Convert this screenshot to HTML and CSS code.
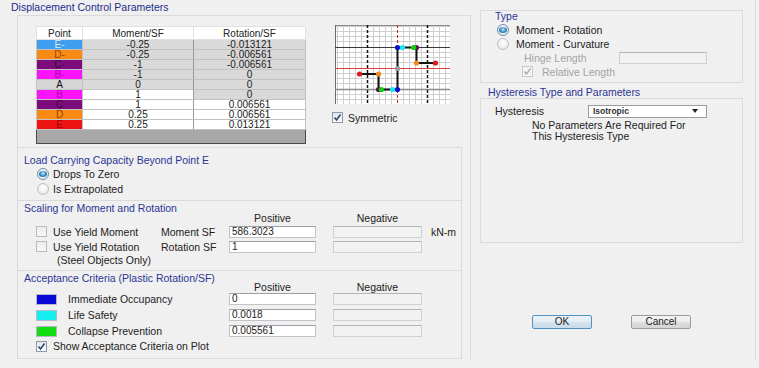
FILE: index.html
```html
<!DOCTYPE html>
<html lang="en">
<head>
    <meta charset="UTF-8">
    <meta name="viewport" content="width=device-width, initial-scale=1.0">
    <title>Displacement Control Parameters</title>
    <link rel="stylesheet" href="styles.css">
</head>
<body>
<div class="dialog">
    <div class="left">
        <div class="caption">Displacement Control Parameters</div>
        <div class="panel">
            <div class="top-group">
                <table class="points">
                    <colgroup><col class="c-pt"><col class="c-mo"><col class="c-ro"></colgroup>
                    <tr><th>Point</th><th>Moment/SF</th><th>Rotation/SF</th></tr>
                    <tr><td class="pt e-neg">E-</td><td class="ro">-0.25</td><td class="ro">-0.013121</td></tr>
                    <tr><td class="pt d-neg">D-</td><td class="ro">-0.25</td><td class="ro">-0.006561</td></tr>
                    <tr><td class="pt c-neg">C-</td><td class="ro">-1</td><td class="ro">-0.006561</td></tr>
                    <tr><td class="pt b-neg">B-</td><td class="ro">-1</td><td class="ro">0</td></tr>
                    <tr><td class="pt a">A</td><td class="ro">0</td><td class="ro">0</td></tr>
                    <tr><td class="pt b">B</td><td>1</td><td class="ro">0</td></tr>
                    <tr><td class="pt c">C</td><td>1</td><td>0.006561</td></tr>
                    <tr><td class="pt d">D</td><td>0.25</td><td>0.006561</td></tr>
                    <tr><td class="pt e">E</td><td>0.25</td><td>0.013121</td></tr>
                    <tr class="filler"><td colspan="3"></td></tr>
                </table>
                <div class="plot-col">
                    <svg class="plot" width="115" height="79" viewBox="0 0 115 79">
                        <rect width="115" height="79" fill="#fff"/>
                        <path d="M2.5 0V79M8.5 0V79M14.5 0V79M20.5 0V79M26.5 0V79M38.5 0V79M44.5 0V79M50.5 0V79M56.5 0V79M68.5 0V79M74.5 0V79M80.5 0V79M86.5 0V79M98.5 0V79M104.5 0V79M110.5 0V79" stroke="#cfcfcf" stroke-width="1"/>
                        <path d="M0 1.5H115M0 6.5H115M0 11.5H115M0 16.5H115M0 27.5H115M0 32.5H115M0 37.5H115M0 48.5H115M0 53.5H115M0 58.5H115M0 69.5H115M0 74.5H115" stroke="#cfcfcf" stroke-width="1"/>
                        <path d="M0 0.5H115" stroke="#8a8a8a"/>
                        <path d="M0.5 0V79" stroke="#6a6a6a"/>
                        <path d="M0 22.5H115" stroke="#3a3a3a"/>
                        <path d="M0 64.5H115" stroke="#8c8c8c" stroke-width="1.5"/>
                        <path d="M0 43.5H115" stroke="#e04040"/>
                        <path d="M32.5 0V79M92.5 0V79" stroke="#111" stroke-width="1.5" stroke-dasharray="3 2"/>
                        <path d="M62.5 0V79" stroke="#d02020" stroke-dasharray="3 2"/>
                        <path d="M62.5 22.5V64.5M62.5 22.5H81.5V38H100.5M62.5 64.5H43.5V49H24.5" fill="none" stroke="#111" stroke-width="2"/>
                        <circle cx="62.5" cy="43.5" r="2.6" fill="#9a9a9a"/>
                        <circle cx="100.5" cy="38" r="2.6" fill="#dd1c1c"/>
                        <circle cx="81.5" cy="38" r="2.6" fill="#f28a1e"/>
                        <circle cx="81.5" cy="22.5" r="2.6" fill="#5a1a50"/>
                        <circle cx="78.5" cy="22.5" r="2.6" fill="#12d012"/>
                        <circle cx="67.5" cy="22.5" r="2.6" fill="#18e8f0"/>
                        <circle cx="62.5" cy="22.5" r="2.6" fill="#1010cc"/>
                        <circle cx="24.5" cy="49" r="2.6" fill="#dd1c1c"/>
                        <circle cx="43.5" cy="49" r="2.6" fill="#f28a1e"/>
                        <circle cx="43.5" cy="64.5" r="2.6" fill="#5a1a50"/>
                        <circle cx="46.5" cy="64.5" r="2.6" fill="#12d012"/>
                        <circle cx="57.5" cy="64.5" r="2.6" fill="#18e8f0"/>
                        <circle cx="62.5" cy="64.5" r="2.6" fill="#1010cc"/>
                    </svg>
                    <div class="sym-row">
                        <span class="check on"><svg width="9" height="9" viewBox="0 0 9 9"><polyline points="1.5,4.5 3.5,7 7.5,1.5" fill="none" stroke="#23476e" stroke-width="1.5"/></svg></span>
                        <span>Symmetric</span>
                    </div>
                </div>
            </div>

            <div class="group load">
                <div class="glabel">Load Carrying Capacity Beyond Point E</div>
                <div class="opt"><span class="radio on"></span><span>Drops To Zero</span></div>
                <div class="opt"><span class="radio"></span><span>Is Extrapolated</span></div>
            </div>

            <div class="group scaling">
                <div class="glabel">Scaling for Moment and Rotation</div>
                <div class="frow heads"><span></span><span></span><span class="hd">Positive</span><span></span><span class="hd">Negative</span></div>
                <div class="frow r15">
                    <span class="ck"><span class="check off"></span><span>Use Yield Moment</span></span>
                    <span>Moment SF</span>
                    <span class="field">586.3023</span><span></span>
                    <span class="field dis"></span>
                    <span class="unit">kN-m</span>
                </div>
                <div class="frow r15">
                    <span class="ck"><span class="check off"></span><span>Use Yield Rotation</span></span>
                    <span>Rotation SF</span>
                    <span class="field">1</span><span></span>
                    <span class="field dis"></span>
                </div>
                <div class="steel">(Steel Objects Only)</div>
            </div>

            <div class="group accept">
                <div class="glabel">Acceptance Criteria (Plastic Rotation/SF)</div>
                <div class="frow heads short"><span></span><span></span><span class="hd">Positive</span><span></span><span class="hd">Negative</span></div>
                <div class="frow r16">
                    <span class="sw-cell"><span class="swatch io"></span><span>Immediate Occupancy</span></span>
                    <span class="field">0</span><span></span>
                    <span class="field dis"></span>
                </div>
                <div class="frow r16">
                    <span class="sw-cell"><span class="swatch ls"></span><span>Life Safety</span></span>
                    <span class="field">0.0018</span><span></span>
                    <span class="field dis"></span>
                </div>
                <div class="frow r16">
                    <span class="sw-cell"><span class="swatch cp"></span><span>Collapse Prevention</span></span>
                    <span class="field">0.005561</span><span></span>
                    <span class="field dis"></span>
                </div>
                <div class="show-row">
                    <span class="check on"><svg width="9" height="9" viewBox="0 0 9 9"><polyline points="1.5,4.5 3.5,7 7.5,1.5" fill="none" stroke="#23476e" stroke-width="1.5"/></svg></span>
                    <span>Show Acceptance Criteria on Plot</span>
                </div>
            </div>
        </div>
    </div>

    <div class="right">
        <div class="box type-box">
            <div class="tlabel">Type</div>
            <div class="topt first"><span class="radio on"></span><span>Moment - Rotation</span></div>
            <div class="topt"><span class="radio"></span><span>Moment - Curvature</span></div>
            <div class="hinge"><span class="muted hinge-lbl">Hinge Length</span><span class="field dis wide"></span></div>
            <div class="rel">
                <span class="check dim"><svg width="9" height="9" viewBox="0 0 9 9"><polyline points="1.5,4.5 3.5,7 7.5,1.5" fill="none" stroke="#a9a9a9" stroke-width="1.3"/></svg></span>
                <span class="muted">Relative Length</span>
            </div>
        </div>
        <div class="hlabel">Hysteresis Type and Parameters</div>
        <div class="box hyst-box">
            <div class="hrow">
                <span class="hyst-lbl">Hysteresis</span>
                <span class="select"><span>Isotropic</span><span class="arrow"></span></span>
            </div>
            <div class="note">No Parameters Are Required For<br>This Hysteresis Type</div>
        </div>
        <div class="buttons">
            <button class="btn default">OK</button>
            <button class="btn">Cancel</button>
        </div>
    </div>
</div>
</body>
</html>
```

FILE: styles.css
```css
* {
    box-sizing: border-box;
}
body {
    margin: 0;
    background: #f0f0f0;
    font-family: "Liberation Sans", Arial, sans-serif;
    font-size: 10.5px;
    color: #222;
}
.dialog {
    display: flex;
    width: 759px;
    height: 368px;
}
.left {
    width: 471px;
}
.caption {
    height: 15px;
    line-height: 14px;
    padding-left: 11px;
    color: #232c8c;
}
.panel {
    margin-left: 17px;
    border: 1px solid #dadada;
    border-bottom: none;
}
.glabel, .hlabel, .tlabel {
    color: #2a3596;
}

/* table + plot */
.top-group {
    display: flex;
    height: 131px;
    padding: 10px 0 0 18px;
}
.points {
    width: 269px;
    table-layout: fixed;
    border-collapse: collapse;
    border: 1px solid #4a4a4a;
    font-size: 10px;
    align-self: flex-start;
}
.c-pt { width: 46px; }
.c-mo { width: 111px; }
.c-ro { width: 112px; }
.points th, .points td {
    padding: 0;
    height: 10px;
    line-height: 8px;
    text-align: center;
    border: 1px solid #c2c2c2;
    background: #fff;
    font-weight: normal;
    color: #222;
}
.points th {
    height: 13px;
    line-height: 11px;
    border-color: #e0e0e0;
}
.points td:nth-child(2) {
    border-right-color: #999;
}
.points td.ro {
    background: #d9d9d9;
}
.points .filler td {
    height: 14px;
    background: #a8a8a8;
    border: none;
}
.pt.e-neg { background: #3f9ef0; color: #d6ecff; }
.pt.d-neg, .pt.d { background: #f98b14; color: #9a3e00; }
.pt.c-neg, .pt.c { background: #7c0c7c; color: #3c0040; }
.pt.b-neg, .pt.b { background: #fb14fb; color: #b000b0; }
.pt.a { background: #d6d6d6; color: #111; }
.pt.e { background: #ee1414; color: #a00000; }

.plot-col {
    margin-left: 29px;
    margin-top: -1px;
}
.plot {
    display: block;
}
.sym-row {
    display: flex;
    align-items: center;
    margin: 8px 0 0 -3px;
    height: 11px;
    gap: 5px;
}

/* controls */
.check {
    width: 11px;
    height: 11px;
    border: 1px solid #8e9aa8;
    background: linear-gradient(#e4e6ea, #fbfbfb);
    flex: none;
}
.check svg {
    display: block;
}
.check.off {
    border-color: #bcbcbc;
    background: linear-gradient(#ececec, #f8f8f8);
}
.check.dim {
    border-color: #c9c9c9;
    background: #f4f4f4;
}
.radio {
    width: 12px;
    height: 12px;
    border-radius: 50%;
    border: 1px solid #b9c0c7;
    background: radial-gradient(circle at 50% 40%, #fff, #e2e2e2);
    position: relative;
    flex: none;
}
.radio.on {
    border-color: #6c8cac;
}
.radio.on::after {
    content: "";
    position: absolute;
    left: 1px;
    top: 2px;
    width: 8px;
    height: 6px;
    border-radius: 50%;
    background: radial-gradient(circle at 50% 40%, #bfeaff, #2f86c0 55%, #0f3a60);
}
.field {
    height: 12px;
    border: 1px solid #c2c4c8;
    border-top-color: #9a9ea6;
    background: #fff;
    font-size: 10px;
    line-height: 10px;
    padding-left: 2px;
}
.field.dis {
    background: #f2f2f2;
    border-color: #cfd0d2;
    border-top-color: #b3b5b9;
}
.muted {
    color: #a4a4a4;
}

/* groups on the left */
.group {
    margin-right: 8px;
    border-top: 1px solid #dadada;
    border-right: 1px solid #dadada;
}
.load {
    padding: 6px 0 4px;
}
.load .glabel {
    height: 12px;
    line-height: 12px;
    padding-left: 6px;
}
.opt {
    display: flex;
    align-items: center;
    gap: 4px;
    height: 15px;
    padding-left: 19px;
}
.scaling {
    padding: 2px 0 4px;
}
.scaling .glabel, .accept .glabel {
    height: 10px;
    line-height: 10px;
    padding-left: 6px;
}
.frow {
    display: grid;
    grid-template-columns: 125px 68px 87px 17px 89px auto;
    align-items: center;
    padding-left: 18px;
}
.frow.heads {
    height: 11px;
    line-height: 11px;
}
.frow.heads.short {
    height: 8px;
    line-height: 8px;
}
.hd {
    text-align: center;
}
.r15 {
    height: 15px;
}
.r16 {
    height: 16px;
}
.ck {
    display: flex;
    align-items: center;
    gap: 6px;
}
.unit {
    padding-left: 9px;
}
.steel {
    height: 12px;
    line-height: 12px;
    padding-left: 39px;
}
.accept {
    padding: 2px 0 5px;
    border-bottom: 1px solid #dadada;
}
.sw-cell {
    grid-column: span 2;
    display: flex;
    align-items: center;
    gap: 11px;
}
.swatch {
    width: 21px;
    height: 11px;
    border: 1px solid #b8b8c8;
}
.swatch.io { background: #0808d8; }
.swatch.ls { background: #14f0f0; }
.swatch.cp { background: #12dc12; }
.show-row {
    display: flex;
    align-items: center;
    gap: 6px;
    height: 14px;
    padding-left: 18px;
}

/* right side */
.right {
    width: 285px;
    height: 360px;
    border-right: 1px solid #dadada;
}
.box {
    margin-left: 9px;
    width: 263px;
    border: 1px solid #dadada;
}
.type-box {
    margin-top: 10px;
    height: 73px;
}
.tlabel {
    height: 10px;
    line-height: 10px;
    padding-left: 14px;
}
.topt {
    display: flex;
    align-items: center;
    gap: 7px;
    height: 14px;
    padding-left: 16px;
}
.topt.first {
    margin-top: 2px;
}
.hinge {
    display: flex;
    align-items: center;
    height: 13px;
    padding-left: 43px;
}
.hinge-lbl {
    width: 95px;
}
.field.wide {
    width: 88px;
}
.rel {
    display: flex;
    align-items: center;
    gap: 9px;
    height: 15px;
    padding-left: 41px;
}
.hlabel {
    margin-top: 4px;
    height: 11px;
    line-height: 11px;
    padding-left: 17px;
}
.hyst-box {
    height: 145px;
    padding-top: 5px;
}
.hrow {
    display: flex;
    align-items: center;
    height: 14px;
    padding-left: 14px;
}
.hyst-lbl {
    width: 93px;
}
.select {
    display: flex;
    align-items: center;
    justify-content: space-between;
    width: 119px;
    height: 13px;
    padding: 0 8px 0 4px;
    border: 1px solid #9c9c9c;
    background: #fff;
    font-size: 8.5px;
    font-weight: bold;
    color: #333;
}
.arrow {
    border-left: 3px solid transparent;
    border-right: 3px solid transparent;
    border-top: 4px solid #222;
}
.note {
    margin-top: 2px;
    padding-left: 51px;
    line-height: 10.5px;
}
.buttons {
    display: flex;
    gap: 39px;
    margin-top: 72px;
    padding-left: 61px;
}
.btn {
    width: 60px;
    height: 14px;
    padding: 0;
    border: 1px solid #9c9c9c;
    border-radius: 2px;
    background: linear-gradient(#f4f4f4, #ececec 50%, #dedede 51%, #d4d4d4);
    font-family: "Liberation Sans", Arial, sans-serif;
    font-size: 10px;
    line-height: 12px;
    color: #222;
}
.btn.default {
    border-color: #4d93c4;
    background: linear-gradient(#edf4f9, #e2ecf3 50%, #d4e3ee 51%, #cadcea);
}
```
